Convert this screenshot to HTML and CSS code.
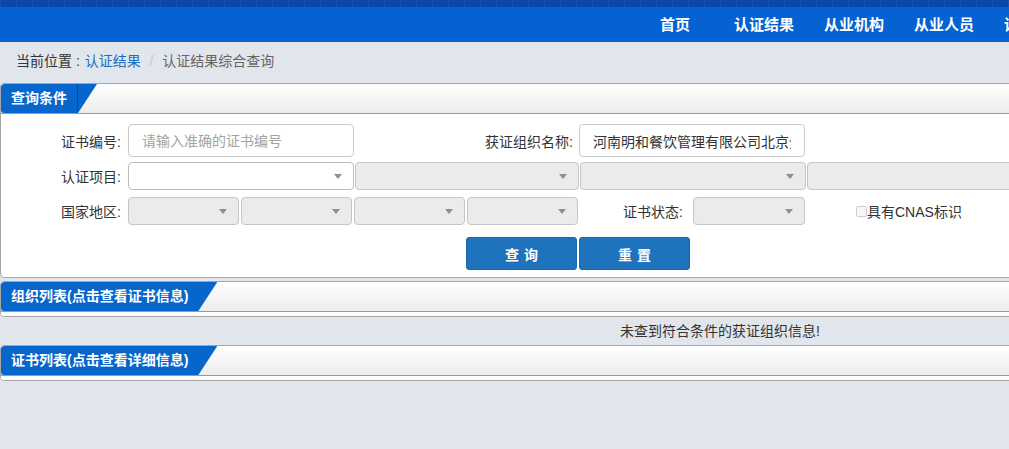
FILE: index.html
```html
<!DOCTYPE html>
<html lang="zh-CN">
<head>
<meta charset="utf-8">
<title>认证结果综合查询</title>
<link rel="stylesheet" href="styles.css">
</head>
<body>
<div class="page">
  <header class="topbar">
    <div class="stripe"></div>
    <nav class="nav">
      <a class="nav-item home" href="#">首页</a>
      <a class="nav-item" href="#">认证结果</a>
      <a class="nav-item" href="#">从业机构</a>
      <a class="nav-item" href="#">从业人员</a>
      <a class="nav-item" href="#">证书查询</a>
    </nav>
  </header>

  <div class="crumb">
    <span class="crumb-label">当前位置 :</span>
    <a class="crumb-link" href="#">认证结果</a>
    <span class="crumb-sep">/</span>
    <span class="crumb-current">认证结果综合查询</span>
  </div>

  <section class="panel">
    <div class="panel-head"><span class="tab"><span class="tab-text lined">查询条件</span></span></div>
    <div class="form">
      <div class="row row1">
        <label class="lbl">证书编号:</label>
        <input class="input" type="text" placeholder="请输入准确的证书编号">
        <label class="lbl lbl-wide">获证组织名称:</label>
        <input class="input" type="text" value="河南明和餐饮管理有限公司北京分公司">
      </div>
      <div class="row row2">
        <label class="lbl">认证项目:</label>
        <div class="sel white w226"></div>
        <div class="sel w224"></div>
        <div class="sel w226"></div>
        <div class="sel w226"></div>
      </div>
      <div class="row row3">
        <label class="lbl">国家地区:</label>
        <div class="sel w111"></div>
        <div class="sel w111"></div>
        <div class="sel w111"></div>
        <div class="sel w111"></div>
        <label class="lbl-status">证书状态:</label>
        <div class="sel w112"></div>
        <span class="chk"></span><span class="chk-text">具有CNAS标识</span>
      </div>
      <div class="row row-btns">
        <button class="btn" type="button">查 询</button>
        <button class="btn" type="button">重 置</button>
      </div>
    </div>
  </section>

  <section class="panel panel-list">
    <div class="panel-head"><span class="tab"><span class="tab-text">组织列表(点击查看证书信息)</span></span></div>
    <div class="panel-fill"></div>
  </section>

  <div class="empty">未查到符合条件的获证组织信息!</div>

  <section class="panel panel-list no-gap">
    <div class="panel-head"><span class="tab"><span class="tab-text">证书列表(点击查看详细信息)</span></span></div>
    <div class="panel-fill"></div>
  </section>
</div>
</body>
</html>
```

FILE: styles.css
```css
* { box-sizing: border-box; }

html, body { margin: 0; padding: 0; }

body {
  background: #e1e5ec;
  font-family: "Liberation Sans", "Noto Sans CJK SC", sans-serif;
  font-size: 14px;
  color: #333;
  overflow: hidden;
}

.page { width: 1440px; }

/* top bar */
.stripe {
  height: 7px;
  background-color: #0a48a8;
  background-image: repeating-linear-gradient(90deg, rgba(255,255,255,0.06) 0 1px, transparent 1px 16px);
}

.nav {
  height: 35px;
  background: #0562d3;
  display: flex;
  align-items: center;
  padding-left: 660px;
}

.nav-item {
  color: #fff;
  font-weight: bold;
  font-size: 15px;
  line-height: 35px;
  text-decoration: none;
  margin-right: 30px;
  white-space: nowrap;
}

.nav-item.home { margin-right: 44px; }

/* breadcrumb */
.crumb {
  height: 41px;
  line-height: 38px;
  padding-left: 16px;
  white-space: nowrap;
}

.crumb-label { color: #333; }
.crumb-link { color: #1b6ec2; text-decoration: none; margin-left: 1px; }
.crumb-sep { color: #c8c8c8; padding: 0 5px 0 5px; }
.crumb-current { color: #666; }

/* panels */
.panel {
  border: 1px solid #a6a6a6;
  border-radius: 4px;
  background: #fff;
  overflow: hidden;
}

.panel + .panel { margin-top: 3px; }

.panel-head {
  height: 30px;
  border-bottom: 1px solid #9a9a9a;
  background: linear-gradient(#ffffff, #ececec);
  display: flex;
}

.tab {
  display: inline-block;
  background: #0766cc;
  color: #fff;
  font-weight: bold;
  font-size: 14px;
  line-height: 29px;
  height: 29px;
  padding: 0 19px 0 10px;
  border-radius: 3px 0 0 3px;
  clip-path: polygon(0 0, 100% 0, calc(100% - 19px) 100%, 0 100%);
  white-space: nowrap;
}

.tab-text {
  display: inline-block;
  padding-right: 10px;
}

.tab-text.lined {
  border-right: 1px solid rgba(0, 30, 80, 0.35);
}

.panel-fill { height: 4px; background: #fff; }

/* form */
.form { padding: 10px 0 7px; }

.row {
  display: flex;
  align-items: center;
  white-space: nowrap;
}

.row1 { height: 33px; margin-bottom: 5px; }
.row2 { height: 28px; margin-bottom: 7px; }
.row3 { height: 28px; margin-bottom: 12px; }
.row-btns { height: 33px; padding-left: 465px; gap: 2px; }

.row2 .sel + .sel { margin-left: 1px; }
.row3 .sel.w111 + .sel.w111 { margin-left: 2px; }

.lbl {
  width: 120px;
  margin-right: 7px;
  text-align: right;
  color: #333;
}

.lbl-wide { width: 219px; margin-right: 6px; }

.input {
  width: 226px;
  height: 33px;
  border: 1px solid #cbcbcb;
  border-radius: 4px;
  padding: 0 13px;
  font-family: "Liberation Sans", "Noto Sans CJK SC", sans-serif;
  font-size: 14px;
  color: #333;
  background: #fff;
  outline: none;
}

.input::placeholder { color: #a3a3a3; }

.sel {
  position: relative;
  height: 28px;
  border: 1px solid #c6c6c6;
  border-radius: 4px;
  background: #ebebeb;
  flex: none;
}

.sel.white { background: #fff; border-color: #bdbdbd; }

.sel::after {
  content: "";
  position: absolute;
  right: 11px;
  top: 50%;
  margin-top: -2px;
  border-left: 4px solid transparent;
  border-right: 4px solid transparent;
  border-top: 5px solid #8f8f8f;
}

.w226 { width: 226px; }
.w224 { width: 224px; }
.w111 { width: 111px; }
.w112 { width: 112px; }

.lbl-status {
  width: 64px;
  margin-left: 41px;
  margin-right: 10px;
  text-align: right;
  color: #333;
}

.chk {
  width: 11px;
  height: 11px;
  border: 1px solid #cfcfcf;
  border-radius: 2px;
  background: #f7f7f7;
  margin-left: 51px;
  flex: none;
}

.chk-text { color: #333; }

.btn {
  width: 111px;
  height: 33px;
  background: #1f73bc;
  border: 1px solid #1a69ae;
  border-radius: 3px;
  color: #fff;
  font-family: "Liberation Sans", "Noto Sans CJK SC", sans-serif;
  font-weight: bold;
  font-size: 14px;
  word-spacing: 1px;
  padding: 0;
}

/* empty message */
.empty {
  height: 28px;
  line-height: 28px;
  text-align: center;
  color: #333;
}
```
